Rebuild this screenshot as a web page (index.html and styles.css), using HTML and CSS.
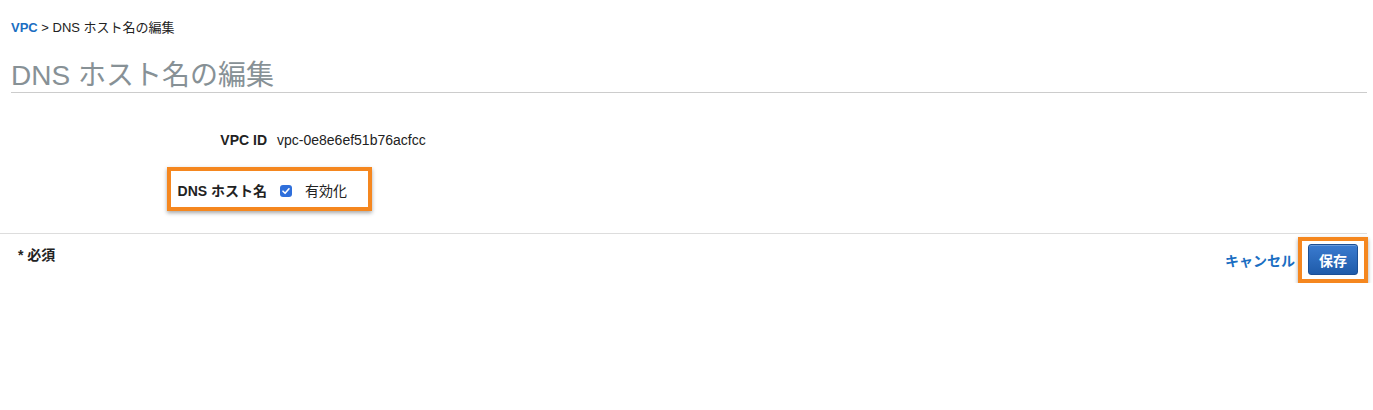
FILE: index.html
```html
<!DOCTYPE html>
<html lang="ja">
<head>
<meta charset="utf-8">
<title>DNS ホスト名の編集</title>
<link rel="stylesheet" href="styles.css">
</head>
<body>
<div class="page">
  <div class="head">
    <div class="crumbs"><a class="crumb-link" href="#">VPC</a> &gt; DNS ホスト名の編集</div>
    <h1 class="title">DNS ホスト名の編集</h1>
  </div>
  <div class="form">
    <div class="row row-id">
      <div class="label">VPC ID</div>
      <div class="value">vpc-0e8e6ef51b76acfcc</div>
    </div>
    <div class="highlight row-dns">
      <div class="row">
        <div class="label">DNS ホスト名</div>
        <span class="check"><svg viewBox="0 0 12 12" width="12" height="12"><path d="M3 6.2 L5.1 8.3 L9 3.8" fill="none" stroke="#fff" stroke-width="1.6" stroke-linecap="round" stroke-linejoin="round"/></svg></span>
        <span class="check-text">有効化</span>
      </div>
    </div>
  </div>
  <div class="footer">
    <div class="required">* 必須</div>
    <div class="actions">
      <a class="cancel" href="#">キャンセル</a>
      <div class="highlight save-wrap"><button class="save">保存</button></div>
    </div>
  </div>
</div>
</body>
</html>
```
FILE: styles.css
```css
* { box-sizing: border-box; }
html, body { margin: 0; padding: 0; background: #fff; }
body {
  font-family: "Liberation Sans", "Noto Sans CJK JP", sans-serif;
  color: #222;
  font-size: 14px;
}
.page { width: 1373px; }
.head { padding: 18px 6px 0 11px; }
.crumbs { font-size: 13px; line-height: 20px; color: #222; }
.crumb-link { color: #1a6ec2; font-weight: bold; text-decoration: none; }
.title {
  margin: 20px 0 0 0;
  font-size: 28px;
  line-height: 36px;
  font-weight: normal;
  color: #879196;
  border-bottom: 1px solid #ccc;
  padding-bottom: 0;
  height: 35px;
}
.form {
  padding-left: 171px;
  padding-top: 37px;
  padding-bottom: 22px;
  border-bottom: 1px solid #ddd;
  width: 1367px;
}
.row { display: flex; align-items: center; height: 20px; }
.label { width: 96px; text-align: right; font-weight: bold; color: #222; line-height: 20px; }
.value { margin-left: 10px; color: #222; line-height: 20px; }
.highlight {
  border: 4px solid #f5871f;
  box-shadow: 0 2px 4px rgba(0,0,0,0.35);
}
.row-dns {
  margin-top: 17px;
  margin-left: -4px;
  width: 205px;
  height: 44px;
  padding: 10px 0 0 0;
}
.check {
  margin-left: 13px;
  width: 12px;
  height: 12px;
  border-radius: 3px;
  background: #2f6fdb;
  display: inline-flex;
}
.check-text { margin-left: 13px; line-height: 20px; }
.footer {
  display: flex;
  justify-content: space-between;
  align-items: flex-start;
  padding: 3px 5px 0 18px;
}
.required { font-weight: bold; margin-top: 8px; line-height: 20px; }
.actions { display: flex; align-items: flex-start; }
.cancel {
  color: #1a6ec2;
  font-weight: bold;
  text-decoration: none;
  line-height: 20px;
  margin-top: 14px;
  margin-right: 3px;
}
.save-wrap {
  width: 70px;
  height: 46px;
  padding: 3px 6px 4px 6px;
}
.save {
  width: 50px;
  height: 31px;
  border: 1px solid #1c4f94;
  border-radius: 3px;
  background: linear-gradient(#3a7bd0, #1f5ba9);
  color: #fff;
  font-family: "Liberation Sans", "Noto Sans CJK JP", sans-serif;
  font-size: 14px;
  font-weight: bold;
  padding: 0;
  box-shadow: inset 0 1px 0 rgba(255,255,255,0.25);
}
```
